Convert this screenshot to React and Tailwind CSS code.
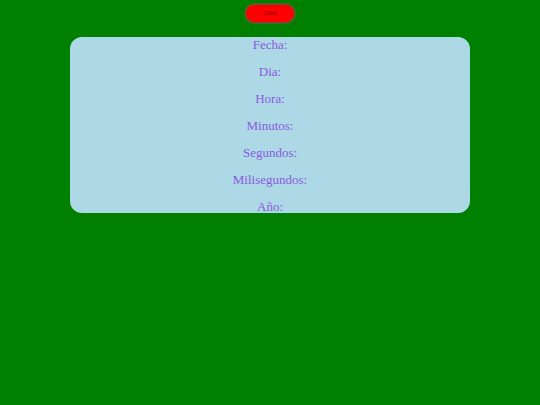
import React from "react";

const labels = ["Fecha:", "Dia:", "Hora:", "Minutos:", "Segundos:", "Milisegundos:", "Año:"];

const App = () => {
  return (
    <div className="min-h-screen w-full bg-[#008000] flex flex-col items-center pt-[3px]">
      <button
        type="button"
        className="w-[52px] h-[21px] rounded-full bg-[#ff0000] border-2 border-[#5f5a2a] text-[6px] text-[#7a0000] font-['Liberation_Sans',sans-serif] flex items-center justify-center"
      >
        Click
      </button>
      <div className="mt-[13px] w-[400px] h-[176px] bg-[#add8e6] rounded-[12px] flex flex-col items-center gap-[12px] overflow-hidden font-['Liberation_Serif',serif] text-[13px] leading-[15px] text-[#8a5ae0]">
        {labels.map((label) => (
          <p key={label}>{label}</p>
        ))}
      </div>
    </div>
  );
};

export default App;
